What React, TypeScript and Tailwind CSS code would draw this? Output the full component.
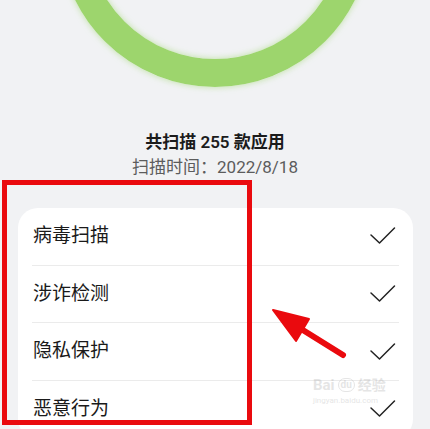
const items = ['病毒扫描', '涉诈检测', '隐私保护', '恶意行为'];

function CheckMark() {
  return (
    <svg width="28" height="20" viewBox="0 0 28 20" fill="none" className="mr-[2px]">
      <path d="M2 9 L10.5 17 L25.5 2" stroke="#222" strokeWidth="1.5" strokeLinecap="round" strokeLinejoin="round" />
    </svg>
  );
}

export default function App() {
  return (
    <div
      className="relative w-[430px] h-[429px] overflow-hidden bg-[#f1f2f4] flex flex-col"
      style={{ fontFamily: 'Roboto, "Noto Sans CJK SC", "Noto Sans", sans-serif' }}
    >
      {/* score ring */}
      <div className="mx-auto -mt-[225px] w-[312px] h-[312px] shrink-0 rounded-full border-[28px] border-[#9dd56d] shadow-[0_0_6px_rgba(157,213,109,0.6),inset_0_0_6px_rgba(157,213,109,0.6)]" />

      <div className="mt-[43px] flex flex-col items-center">
        <div className="text-[17px] leading-[25px] font-semibold text-[#1b1b1b]">共扫描 255 款应用</div>
        <div className="text-[17px] leading-[25px] text-[#5c5c5c]">扫描时间：2022/8/18</div>
      </div>

      <div className="mt-[28px] ml-[18px] mr-[17px] bg-white rounded-[20px] px-[14px]">
        {items.map((label) => (
          <div
            key={label}
            className="h-[57.7px] flex items-center justify-between border-b border-[#ebebeb]"
          >
            <span className="pl-[1px] text-[19px] text-[#1a1a1a]">{label}</span>
            <CheckMark />
          </div>
        ))}
      </div>

      {/* annotation: red box */}
      <div className="absolute left-[2px] top-[180px] w-[250px] h-[245px] border-[5px] border-[#ea0a0e]" />

      {/* annotation: red arrow */}
      <svg className="absolute left-0 top-0 pointer-events-none" width="430" height="429">
        <line x1="343" y1="355" x2="298" y2="327" stroke="#ea0a0e" strokeWidth="6" strokeLinecap="round" />
        <polygon points="273,310 296,341 309,319" fill="#ea0a0e" stroke="#ea0a0e" strokeWidth="2" strokeLinejoin="round" />
      </svg>

      {/* watermark */}
      <div className="absolute left-[313px] top-[376px] flex flex-col items-start gap-[2px] opacity-25 pointer-events-none select-none text-[#9a9a9a]">
        <div className="flex items-center gap-[3px] font-bold">
          <span className="text-[15px] leading-[18px]">Bai</span>
          <span className="rounded-full border border-[#9a9a9a] px-[2px] text-[10px] leading-[12px]">du</span>
          <span className="text-[14px] leading-[18px]">经验</span>
        </div>
        <div className="text-[8px] leading-[10px]">jingyan.baidu.com</div>
      </div>
    </div>
  );
}
